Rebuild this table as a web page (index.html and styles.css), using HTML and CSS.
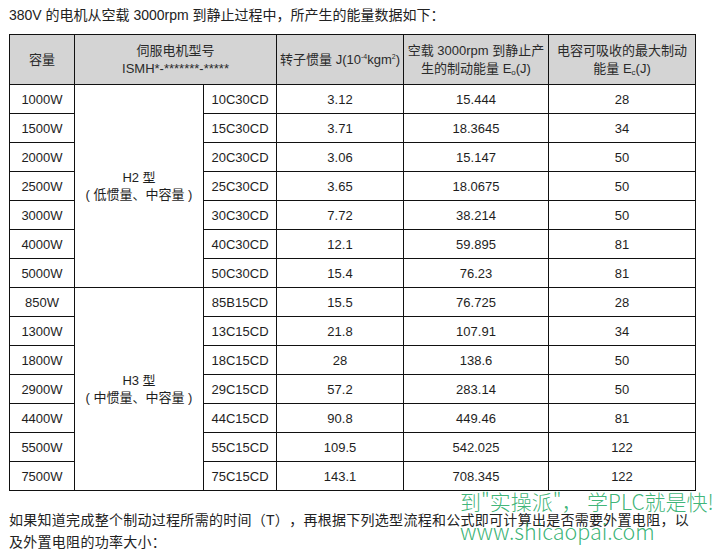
FILE: index.html
```html
<!DOCTYPE html>
<html lang="zh-CN">
<head>
<meta charset="utf-8">
<title>制动能量数据</title>
<link rel="stylesheet" href="styles.css">
</head>
<body>
<div class="page">
  <p class="intro">380V 的电机从空载 3000rpm 到静止过程中，所产生的能量数据如下：</p>
  <table class="data">
    <colgroup>
      <col class="c1"><col class="c2"><col class="c3"><col class="c4"><col class="c5"><col class="c6">
    </colgroup>
    <thead>
      <tr>
        <th>容量</th>
        <th colspan="2">伺服电机型号<br>ISMH*-*******-*****</th>
        <th>转子惯量 J(10<sup>-4</sup>kgm<sup>2</sup>)</th>
        <th>空载 3000rpm 到静止产<br>生的制动能量 E<sub>o</sub>(J)</th>
        <th>电容可吸收的最大制动<br>能量 E<sub>c</sub>(J)</th>
      </tr>
    </thead>
    <tbody>
      <tr><td>1000W</td><td rowspan="7" class="type">H2 型<br>( 低惯量、中容量 )</td><td>10C30CD</td><td>3.12</td><td>15.444</td><td>28</td></tr>
      <tr><td>1500W</td><td>15C30CD</td><td>3.71</td><td>18.3645</td><td>34</td></tr>
      <tr><td>2000W</td><td>20C30CD</td><td>3.06</td><td>15.147</td><td>50</td></tr>
      <tr><td>2500W</td><td>25C30CD</td><td>3.65</td><td>18.0675</td><td>50</td></tr>
      <tr><td>3000W</td><td>30C30CD</td><td>7.72</td><td>38.214</td><td>50</td></tr>
      <tr><td>4000W</td><td>40C30CD</td><td>12.1</td><td>59.895</td><td>81</td></tr>
      <tr><td>5000W</td><td>50C30CD</td><td>15.4</td><td>76.23</td><td>81</td></tr>
      <tr><td>850W</td><td rowspan="7" class="type">H3 型<br>( 中惯量、中容量 )</td><td>85B15CD</td><td>15.5</td><td>76.725</td><td>28</td></tr>
      <tr><td>1300W</td><td>13C15CD</td><td>21.8</td><td>107.91</td><td>34</td></tr>
      <tr><td>1800W</td><td>18C15CD</td><td>28</td><td>138.6</td><td>50</td></tr>
      <tr><td>2900W</td><td>29C15CD</td><td>57.2</td><td>283.14</td><td>50</td></tr>
      <tr><td>4400W</td><td>44C15CD</td><td>90.8</td><td>449.46</td><td>81</td></tr>
      <tr><td>5500W</td><td>55C15CD</td><td>109.5</td><td>542.025</td><td>122</td></tr>
      <tr><td>7500W</td><td>75C15CD</td><td>143.1</td><td>708.345</td><td>122</td></tr>
    </tbody>
  </table>
  <div class="outro-wrap">
    <p class="outro">如果知道完成整个制动过程所需的时间（T），再根据下列选型流程和公式即可计算出是否需要外置电阻，以及外置电阻的功率大小：</p>
    <div class="watermark">
      <div class="wm1">到"实操派"， 学PLC就是快!</div>
      <div class="wm2">www.shicaopai.com</div>
    </div>
  </div>
</div>
</body>
</html>
```

FILE: styles.css
```css
html, body {
  margin: 0;
  padding: 0;
  background: #ffffff;
}

body {
  font-family: "Liberation Sans", "Noto Sans CJK SC", sans-serif;
  color: #222222;
  text-spacing-trim: space-all;
}

.page {
  padding: 5px 0 0 9px;
}

.intro {
  margin: 0;
  font-size: 14px;
  line-height: 20px;
  color: #222;
}

.data {
  margin-top: 9px;
  border-collapse: collapse;
  table-layout: fixed;
  width: 686px;
  font-size: 13px;
  color: #1e1e1e;
}

.c1 { width: 65px; }
.c2 { width: 129px; }
.c3 { width: 73px; }
.c4 { width: 127px; }
.c5 { width: 145px; }
.c6 { width: 147px; }

.data th,
.data td {
  border: 1px solid #111;
  padding: 0;
  text-align: center;
  vertical-align: middle;
}

.data th {
  background: #d4d4d4;
  font-weight: normal;
  height: 49px;
  line-height: 18px;
  color: #2a2a2a;
}

.data td {
  height: 28px;
  line-height: 17px;
}

.data sup {
  font-size: 7px;
  vertical-align: 5px;
  line-height: 0;
}

.data sub {
  font-size: 8px;
  vertical-align: -2px;
  line-height: 0;
}

.outro-wrap {
  position: relative;
  width: 688px;
}

.outro {
  margin: 18px 0 0 0;
  font-size: 14px;
  line-height: 22px;
  letter-spacing: 0.28px;
  color: #222;
}

.watermark {
  position: absolute;
  left: 451px;
  top: -21px;
  color: rgba(40, 172, 104, 0.9);
  font-family: "Noto Sans CJK SC", "Liberation Sans", sans-serif;
  font-weight: 300;
  pointer-events: none;
}

.wm1 {
  font-size: 21px;
  line-height: 26px;
  white-space: nowrap;
}

.wm2 {
  font-size: 21.5px;
  line-height: 33px;
  white-space: nowrap;
}
```
